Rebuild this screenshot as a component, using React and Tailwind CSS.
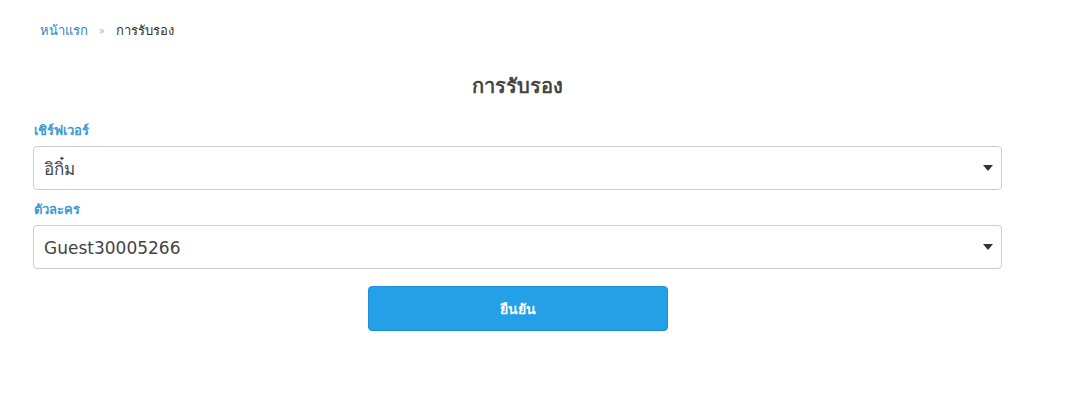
import React from 'react';

const font = { fontFamily: '"Noto Sans", "Liberation Sans", Tahoma, sans-serif' };
const valueFont = { fontFamily: '"DejaVu Sans", "Noto Sans", sans-serif' };

const Caret = () => (
  <svg width="10" height="6" viewBox="0 0 10 6" className="shrink-0">
    <path d="M0 0h10L5 6z" fill="#333" />
  </svg>
);

const SelectBox = ({ value }) => (
  <div className="flex h-[44px] items-center justify-between rounded-[4px] border border-[#ccc] bg-white pl-[10px] pr-[8px]">
    <span className="pt-[4px] text-[17px] text-[#444]" style={valueFont}>{value}</span>
    <Caret />
  </div>
);

const App = () => {
  return (
    <div className="min-h-[401px] w-[1066px] bg-white" style={font}>
      <nav className="flex items-center pl-[40px] pt-[19px] text-[13px] leading-[22px]">
        <a className="text-[#2b87c9]">หน้าแรก</a>
        <span className="mx-[11px] text-[11px] text-[#bbb]">»</span>
        <span className="text-[#333]">การรับรอง</span>
      </nav>

      <div className="ml-[33px] w-[969px]">
        <h1 className="mt-[31px] text-center text-[20px] font-bold leading-[28px] text-[#444]">การรับรอง</h1>

        <label className="mt-[20px] block pl-[1px] text-[13px] font-bold leading-[20px] text-[#3d9ad8]">เชิร์ฟเวอร์</label>
        <div className="mt-[6px]">
          <SelectBox value="อิกิ๋ม" />
        </div>

        <label className="mt-[9px] block pl-[1px] text-[13px] font-bold leading-[20px] text-[#3d9ad8]">ตัวละคร</label>
        <div className="mt-[6px]">
          <SelectBox value="Guest30005266" />
        </div>

        <div className="mt-[17px] flex justify-center">
          <button className="h-[45px] w-[300px] rounded-[4px] border border-[#1c8fd6] bg-[#23a0e8] text-[14px] font-bold text-white">
            ยืนยัน
          </button>
        </div>
      </div>
    </div>
  );
};

export default App;
